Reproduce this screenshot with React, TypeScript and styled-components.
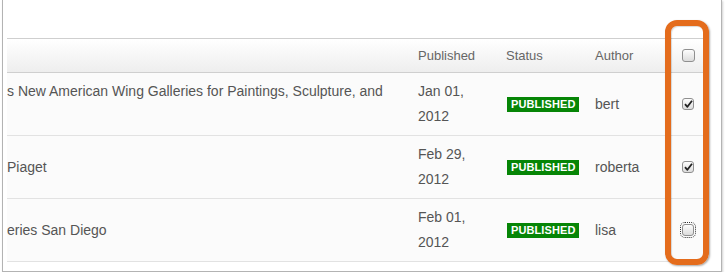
import React from 'react'
import styled, { createGlobalStyle } from 'styled-components'

const GlobalStyle = createGlobalStyle`
  html, body {
    margin: 0;
    padding: 0;
    background: #ffffff;
  }
  body {
    font-family: "Liberation Sans", Arial, sans-serif;
    font-size: 13px;
    color: #555;
  }
`

interface Article {
  title: string
  titleTop?: boolean
  date: string
  year: string
  author: string
  checked: boolean
  focused?: boolean
}

const articles: Article[] = [
  {
    title: 's New American Wing Galleries for Paintings, Sculpture, and',
    titleTop: true,
    date: 'Jan 01,',
    year: '2012',
    author: 'bert',
    checked: true,
  },
  { title: ' Piaget', date: 'Feb 29,', year: '2012', author: 'roberta', checked: true },
  {
    title: 'eries San Diego',
    date: 'Feb 01,',
    year: '2012',
    author: 'lisa',
    checked: false,
    focused: true,
  },
]

const Frame = styled.div`
  position: relative;
  margin-left: 2px;
  width: 720px;
  height: 272px;
  border: 1px solid #b3b3b3;
  border-top: none;
  box-shadow: 1px 1px 2px rgba(0, 0, 0, 0.18);
  background: #fff;
  padding: 38px 0 0 4px;
  box-sizing: border-box;
`

const Table = styled.div`
  width: 698px;
  display: grid;
  grid-template-columns: 404px 88px 89px 77px 40px;
`

const HeadCell = styled.div`
  height: 33px;
  display: flex;
  align-items: center;
  padding-left: 7px;
  border-top: 1px solid #cfcfcf;
  border-bottom: 1px solid #cfcfcf;
  background: linear-gradient(#ffffff, #eeeeee);
  color: #666;
  white-space: nowrap;
`

const Cell = styled.div<{ $top?: boolean }>`
  height: 50px;
  padding: 6px 0 6px 7px;
  border-bottom: 1px solid #e2e2e2;
  background: #fbfbfb;
  display: flex;
  align-items: ${(p) => (p.$top ? 'flex-start' : 'center')};
  font-size: 14px;
  line-height: 25px;
  white-space: nowrap;
  overflow: hidden;
`

const TitleText = styled.span`
  margin-left: -7px;
  color: #555;
`

const DateText = styled.div`
  color: #555;
`

const Badge = styled.span`
  display: inline-block;
  background: #068506;
  color: #fff;
  font-weight: bold;
  font-size: 11px;
  line-height: 15px;
  padding: 0 4px;
  letter-spacing: 0.1px;
  margin-left: 1px;
`

const CheckCell = styled(Cell)`
  padding-left: 17px;
`

const HeadCheckCell = styled(HeadCell)`
  padding-left: 17px;
`

const Box = styled.span<{ $focused?: boolean; $size?: number }>`
  position: relative;
  width: ${(p) => p.$size ?? 12}px;
  height: ${(p) => p.$size ?? 12}px;
  box-sizing: border-box;
  border: 1px solid #8f8f8f;
  border-radius: 3px;
  background: linear-gradient(#fdfdfd, #dcdcdc);
  display: flex;
  align-items: center;
  justify-content: center;
  outline: ${(p) => (p.$focused ? '1px dotted #333' : 'none')};
  outline-offset: 1px;
`

const Annotation = styled.div`
  position: absolute;
  left: 662px;
  top: 20px;
  width: 44px;
  height: 245px;
  box-sizing: border-box;
  border: 6px solid #e46c1c;
  border-radius: 12px;
  box-shadow: 1px 1px 2px rgba(0, 0, 0, 0.35), inset 1px 1px 1px rgba(0, 0, 0, 0.15);
  pointer-events: none;
`

const Check = () => (
  <svg width="9" height="8" viewBox="0 0 9 8">
    <path d="M1 4.2 L3.4 6.8 L8 0.8" fill="none" stroke="#222" strokeWidth="1.8" strokeLinejoin="round" />
  </svg>
)

const CheckBox = ({ checked, focused, size }: { checked?: boolean; focused?: boolean; size?: number }) => (
  <Box $focused={focused} $size={size}>
    {checked && <Check />}
  </Box>
)

const App = () => {
  return (
    <>
      <GlobalStyle />
      <Frame>
        <Table>
          <HeadCell />
          <HeadCell>Published</HeadCell>
          <HeadCell>Status</HeadCell>
          <HeadCell>Author</HeadCell>
          <HeadCheckCell>
            <CheckBox size={13} />
          </HeadCheckCell>
          {articles.map((a) => (
            <React.Fragment key={a.author}>
              <Cell $top={a.titleTop}>
                <TitleText>{a.title}</TitleText>
              </Cell>
              <Cell>
                <DateText>
                  {a.date}
                  <br />
                  {a.year}
                </DateText>
              </Cell>
              <Cell>
                <Badge>PUBLISHED</Badge>
              </Cell>
              <Cell>{a.author}</Cell>
              <CheckCell>
                <CheckBox checked={a.checked} focused={a.focused} />
              </CheckCell>
            </React.Fragment>
          ))}
        </Table>
        <Annotation />
      </Frame>
    </>
  )
}

export default App
